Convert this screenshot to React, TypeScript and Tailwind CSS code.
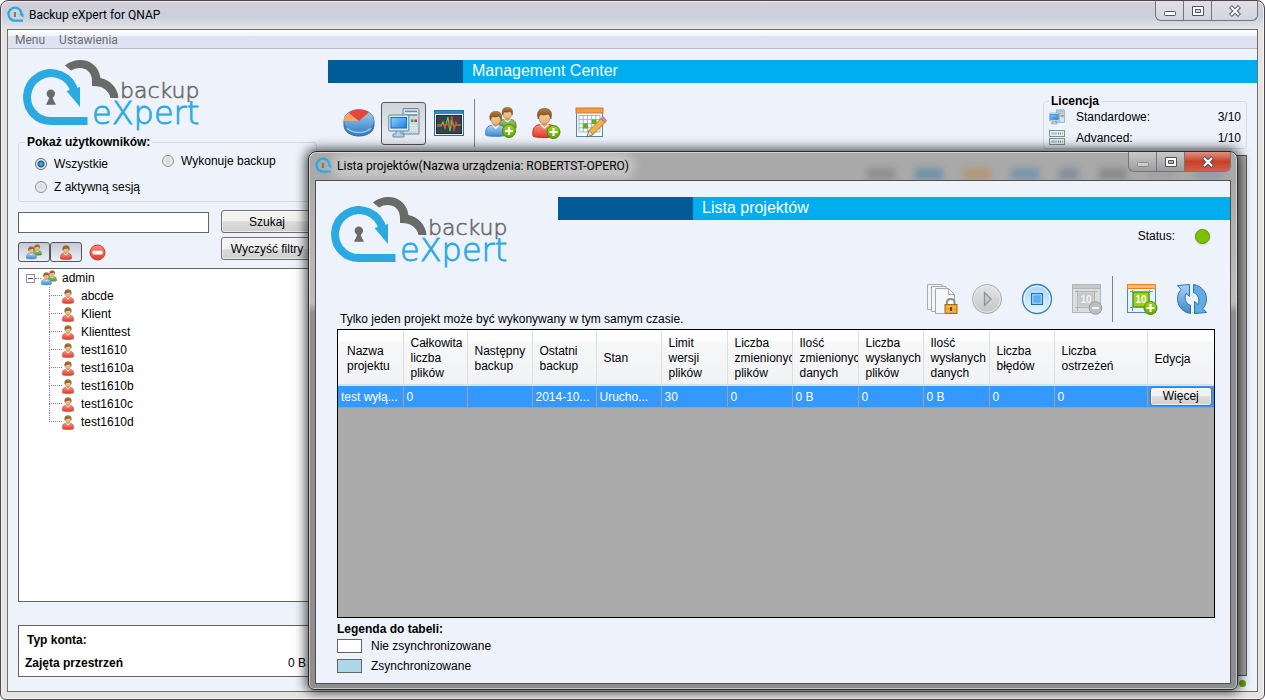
import type { ReactNode } from "react";

const USERS = ["abcde", "Klient", "Klienttest", "test1610", "test1610a", "test1610b", "test1610c", "test1610d"];

const COLUMNS = [
	{ lines: ["Nazwa", "projektu"], value: "test wyłą...", width: "w-[65px]" },
	{ lines: ["Całkowita", "liczba", "plików"], value: "0", width: "w-[64px]" },
	{ lines: ["Następny", "backup"], value: "", width: "w-[65px]" },
	{ lines: ["Ostatni", "backup"], value: "2014-10...", width: "w-[64px]" },
	{ lines: ["Stan"], value: "Urucho...", width: "w-[65px]" },
	{ lines: ["Limit", "wersji", "plików"], value: "30", width: "w-[66px]" },
	{ lines: ["Liczba", "zmienionych", "plików"], value: "0", width: "w-[65px]" },
	{ lines: ["Ilość", "zmienionych", "danych"], value: "0 B", width: "w-[66px]" },
	{ lines: ["Liczba", "wysłanych", "plików"], value: "0", width: "w-[65px]" },
	{ lines: ["Ilość", "wysłanych", "danych"], value: "0 B", width: "w-[66px]" },
	{ lines: ["Liczba", "błędów"], value: "0", width: "w-[65px]" },
	{ lines: ["Liczba", "ostrzeżeń"], value: "0", width: "" },
];

/* ---------- shared gradients ---------- */

function Gradients() {
	return (
		<svg width="0" height="0" className="absolute" aria-hidden="true">
			<defs>
				<linearGradient id="blue" x1="0" y1="0" x2="0" y2="1">
					<stop offset="0" stopColor="#a9d5f5" />
					<stop offset="1" stopColor="#3f87c9" />
				</linearGradient>
				<linearGradient id="red" x1="0" y1="0" x2="0" y2="1">
					<stop offset="0" stopColor="#f9907f" />
					<stop offset="1" stopColor="#e23a2c" />
				</linearGradient>
				<linearGradient id="green" x1="0" y1="0" x2="0" y2="1">
					<stop offset="0" stopColor="#9cc46c" />
					<stop offset="1" stopColor="#5f9132" />
				</linearGradient>
				<linearGradient id="badge" x1="0" y1="0" x2="0" y2="1">
					<stop offset="0" stopColor="#9bd81c" />
					<stop offset="1" stopColor="#5fa600" />
				</linearGradient>
				<linearGradient id="hair" x1="0" y1="0" x2="0" y2="1">
					<stop offset="0" stopColor="#b5803f" />
					<stop offset="1" stopColor="#6b3f12" />
				</linearGradient>
				<linearGradient id="skin" x1="0" y1="0" x2="0" y2="1">
					<stop offset="0" stopColor="#f5d3a6" />
					<stop offset="1" stopColor="#e5ae74" />
				</linearGradient>
				<linearGradient id="screen" x1="0" y1="0" x2="1" y2="1">
					<stop offset="0" stopColor="#8fd0ff" />
					<stop offset="1" stopColor="#1a7fe0" />
				</linearGradient>
				<linearGradient id="grey" x1="0" y1="0" x2="0" y2="1">
					<stop offset="0" stopColor="#e4e5e6" />
					<stop offset="1" stopColor="#c3c4c6" />
				</linearGradient>
				<linearGradient id="lightBlue" x1="0" y1="0" x2="0" y2="1">
					<stop offset="0" stopColor="#a6d4f8" />
					<stop offset="1" stopColor="#e6f6ff" />
				</linearGradient>
			</defs>
		</svg>
	);
}

/* ---------- icons ---------- */

function Logo() {
	return (
		<svg width="182" height="74" viewBox="0 0 182 74" role="img" aria-label="backup eXpert">
			<path d="M12 55 A24 24 0 1 1 51.5 32" fill="none" stroke="#2ba9e1" strokeWidth="8" />
			<path d="M10 53 C15 59 21 61 28 61 H64.5" fill="none" stroke="#2ba9e1" strokeWidth="8" />
			<path d="M43.5 31 L57 27 V47 Z" fill="#2ba9e1" />
			<path d="M42 5.5 C54 -4.5 75 -1 77.5 18 C87 20 95 28 95.5 38 H87.5 C86 30 79 25.5 69 26 V20 C68 8 57 5.5 48 10.5 Z" fill="#6a6a68" />
			<circle cx="27.8" cy="33.8" r="4.2" fill="#6a6a68" />
			<path d="M26 36 H29.6 L30 39 L33 44.8 H23 L25.8 39 Z" fill="#6a6a68" />
			<g fontFamily="'DejaVu Sans', sans-serif" fontWeight="200">
				<text x="97" y="38" fontSize="22" fill="#6a6a68" stroke="#6a6a68" strokeWidth="0.6">backup</text>
				<text x="69" y="64" fontSize="32" fill="#2ba9e1" stroke="#2ba9e1" strokeWidth="0.8">eXpert</text>
			</g>
		</svg>
	);
}

function AppIcon() {
	return (
		<svg width="17" height="17" viewBox="0 0 17 17" aria-hidden="true">
			<path d="M14.5 8 A6.5 6.5 0 1 0 8.5 14.6 H16" fill="none" stroke="#2ba9e1" strokeWidth="2.4" />
			<path d="M12 8 H16.5 V12 Z" fill="#2ba9e1" />
			<path d="M7 6 H9 V11 H6.8 Z" fill="#7c7c7c" />
		</svg>
	);
}

function PersonShape({ fill, stroke }: { fill: string; stroke: string }) {
	return (
		<g>
			<path d="M1 28 C0 20 3 17 8.5 16.5 H16.5 C22 17 25 20 24 28 C23 30 2 30 1 28 Z" fill={fill} stroke={stroke} />
			<path d="M8 16.5 L12.5 21 L17 16.5 Z" fill="#fff" stroke="#ddd" strokeWidth="0.5" />
			<path d="M10 13 H15 V17 L12.5 19 L10 17 Z" fill="#dca368" />
			<ellipse cx="12.5" cy="9.5" rx="5.6" ry="6.8" fill="url(#skin)" stroke="#a8723a" strokeWidth="0.6" />
			<path d="M6.2 11 C4 3 8 0.5 12.5 0.5 C17.5 0.5 21 3 18.8 11 C18.5 8 17.5 7 16 6 C13 7.5 9.5 7 8.5 6.5 C7 8 6.6 9 6.2 11 Z" fill="url(#hair)" stroke="#70451a" strokeWidth="0.6" />
		</g>
	);
}

function Plus({ x, y }: { x: number; y: number }) {
	return (
		<g transform={`translate(${x} ${y})`}>
			<circle r="6.5" fill="url(#badge)" stroke="#4b8a00" />
			<path d="M-4 0 H4 M0 -4 V4" stroke="#fff" strokeWidth="2.2" />
		</g>
	);
}

function UserIcon({ className }: { className: string }) {
	return (
		<svg className={className} viewBox="0 0 25 30" aria-hidden="true">
			<PersonShape fill="url(#red)" stroke="#c32b1f" />
		</svg>
	);
}

function GroupShape() {
	return (
		<>
			<g transform="translate(13 0) scale(0.75)">
				<PersonShape fill="url(#green)" stroke="#4d7c28" />
			</g>
			<g transform="translate(0 4) scale(0.86)">
				<PersonShape fill="url(#blue)" stroke="#2f76bd" />
			</g>
		</>
	);
}

function GroupIcon({ className }: { className: string }) {
	return (
		<svg className={className} viewBox="0 0 32 31" aria-hidden="true">
			<GroupShape />
		</svg>
	);
}

function PieIcon() {
	return (
		<svg width="32" height="32" viewBox="0 0 32 32" aria-hidden="true">
			<path d="M1 14 V18 C1 25 8 29 16 29 C24 29 31 25 31 18 V14 Z" fill="#3c7fbb" stroke="#2e6ca6" />
			<ellipse cx="16" cy="13.5" rx="15" ry="11" fill="url(#blue)" stroke="#4c93cf" />
			<path d="M16 14 L5.5 6 C2 8.5 0.8 11 1.2 14 Z" fill="#f3a763" />
			<path d="M16 14 L5.5 5.8 C11 1.5 20 1.5 26 5.3 Z" fill="#e8463a" />
			<path d="M4 21 C9 27 23 27 28 21" fill="none" stroke="#8fc6ef" strokeWidth="1.5" />
		</svg>
	);
}

function ComputerIcon({ className }: { className: string }) {
	return (
		<svg className={className} viewBox="0 0 32 32" aria-hidden="true">
			<path d="M15 1.5 H30 L31 3 V27 H15 Z" fill="#ccdae4" stroke="#6d8ba1" />
			<path d="M17 4.5 H29 M17 8 H29" stroke="#6d8ba1" strokeWidth="1.5" />
			<path d="M17 6.2 H29" stroke="#fff" />
			<rect x="23" y="12.5" width="2.5" height="2.5" fill="#2dab2d" />
			<rect x="26.5" y="12.5" width="2.5" height="2.5" fill="#e02828" />
			<path d="M22 18.5 H29 M22 21 H29 M22 23.5 H29" stroke="#fff" strokeDasharray="1 1" />
			<path d="M8 23 H13 V27 H16 V30 H5 V27 H8 Z" fill="#b9d3e3" stroke="#6793ae" />
			<rect x="0.8" y="8" width="20" height="16" rx="1" fill="#d7e9f4" stroke="#5d8cab" />
			<rect x="3" y="10.5" width="15.5" height="10.5" fill="url(#screen)" stroke="#1b6fbd" />
		</svg>
	);
}

function MonitorIcon() {
	return (
		<svg width="32" height="32" viewBox="0 0 32 32" aria-hidden="true">
			<rect x="1.5" y="3.5" width="29" height="25" fill="#e2f1fa" stroke="#1d74a8" />
			<rect x="2" y="4" width="28" height="3" fill="#2b8cc4" />
			<rect x="3.5" y="8.5" width="25" height="18" fill="#3b4146" stroke="#262b2f" />
			<path d="M4 19 H8 L10 15 L12 21 L15 10 L17 24 L19 13 L21 21 L22 18 H28" fill="none" stroke="#3fe05a" strokeWidth="1.2" />
			<path d="M4 17.5 H10 L12 20 L14 16 L16 20 L19 9 L21 24 L23 15 L24 18 H28" fill="none" stroke="#f2413a" strokeWidth="1.1" />
		</svg>
	);
}

function AddGroupIcon() {
	return (
		<svg width="32" height="32" viewBox="0 0 32 32" aria-hidden="true">
			<GroupShape />
			<Plus x={24} y={24} />
		</svg>
	);
}

function AddUserIcon() {
	return (
		<svg width="32" height="32" viewBox="0 0 32 32" aria-hidden="true">
			<g transform="translate(2 1)">
				<PersonShape fill="url(#red)" stroke="#c32b1f" />
			</g>
			<Plus x={23.5} y={25} />
		</svg>
	);
}

function CalendarEditIcon() {
	return (
		<svg width="32" height="32" viewBox="0 0 32 32" aria-hidden="true">
			<rect x="1.5" y="1.5" width="26" height="28" fill="#fbfdff" stroke="#4a8ab5" />
			<rect x="1" y="1" width="27" height="5" fill="#f39a4a" stroke="#d47924" />
			<path d="M4 8.5 H25 V25 H4 Z M8.2 8.5 V25 M12.4 8.5 V25 M16.6 8.5 V25 M20.8 8.5 V25 M4 12.6 H25 M4 16.7 H25 M4 20.8 H25" fill="none" stroke="#a2b6c2" />
			<rect x="8" y="16.5" width="5" height="5" fill="#5fae1f" />
			<rect x="17" y="12.5" width="4.5" height="4.5" fill="#5fae1f" />
			<path d="M12 30 L14 23.5 L26 11.5 L30 15.5 L18 27.5 Z" fill="#f5b04a" stroke="#9b671d" strokeWidth="0.8" />
			<path d="M12 30 L14 23.5 L18 27.5 Z" fill="#f4dfc0" stroke="#555" strokeWidth="0.6" />
			<path d="M26 11.5 L28 9.5 L31.5 13.5 L30 15.5 Z" fill="#d88cb4" stroke="#8d5a78" strokeWidth="0.7" />
		</svg>
	);
}

function ServerIcon() {
	return (
		<svg className="h-4 w-4" viewBox="0 0 16 16" aria-hidden="true">
			{[0.5, 8.5].map((y) => (
				<g key={y} transform={`translate(0 ${y})`}>
					<rect x="0.5" y="0" width="15" height="6" fill="#e9eef2" stroke="#7b91a1" />
					<path d="M2.5 3 H8" stroke="#7c8994" strokeWidth="2" strokeDasharray="1 1" />
					<path d="M9 3 H10 M11 3 H12" stroke="#49a34a" strokeWidth="2" />
					<path d="M13 3 H14" stroke="#e89a2a" strokeWidth="2" />
				</g>
			))}
		</svg>
	);
}

function RemoveIcon() {
	return (
		<svg width="17" height="17" viewBox="0 0 17 17" aria-hidden="true">
			<circle cx="8.5" cy="8.5" r="7.5" fill="url(#red)" stroke="#c93a2d" />
			<rect x="3.5" y="6.8" width="10" height="3.6" rx="1" fill="#fff" />
		</svg>
	);
}

function LockedFilesIcon() {
	return (
		<svg width="32" height="32" viewBox="0 0 32 32" aria-hidden="true">
			<path d="M1.5 1.5 H16 V26.5 H1.5 Z" fill="#f3f4f5" stroke="#aaadb0" />
			<path d="M5.5 3.5 H20 V28.5 H5.5 Z" fill="#f3f4f5" stroke="#aaadb0" />
			<path d="M9.5 5.5 H22.5 L28.5 11.5 V30.5 H9.5 Z" fill="#f6f7f8" stroke="#a3a6aa" />
			<path d="M22.5 5.5 V11.5 H28.5 Z" fill="#fff" stroke="#a3a6aa" />
			<path d="M21 22 V19 C21 15 28.5 15 28.5 19 V22" fill="none" stroke="#8c9095" strokeWidth="2" />
			<rect x="19" y="21.5" width="12" height="9" fill="#e9a12c" stroke="#a96c0d" />
			<path d="M20 24 H30 M20 28 H30" stroke="#f7c872" />
			<rect x="24" y="24" width="2" height="4" fill="#6b4204" />
		</svg>
	);
}

function PlayIcon() {
	return (
		<svg width="32" height="32" viewBox="0 0 32 32" aria-hidden="true">
			<circle cx="16" cy="16" r="14.5" fill="url(#grey)" stroke="#abadb0" />
			<circle cx="16" cy="16" r="13.2" fill="none" stroke="#e6e7e8" />
			<path d="M13.5 9.5 L20 16 L13.5 22.5 Z" fill="#c9cacc" stroke="#8f9194" strokeWidth="1.3" />
		</svg>
	);
}

function StopIcon() {
	return (
		<svg width="32" height="32" viewBox="0 0 32 32" aria-hidden="true">
			<circle cx="16" cy="16" r="14.5" fill="url(#lightBlue)" stroke="#3a80b8" strokeWidth="1.3" />
			<circle cx="16" cy="16" r="13" fill="none" stroke="#e9f6ff" />
			<rect x="10.5" y="10.5" width="11" height="11" fill="#5fadea" stroke="#2b6da6" />
			<rect x="11.8" y="11.8" width="8.4" height="8.4" fill="none" stroke="#a5d6fa" />
		</svg>
	);
}

function RemoveTaskIcon() {
	return (
		<svg width="32" height="32" viewBox="0 0 32 32" aria-hidden="true">
			<rect x="1.5" y="1.5" width="28" height="28" fill="#dcddde" stroke="#b3b5b7" />
			<rect x="1.5" y="1.5" width="28" height="4" fill="#c6c8ca" stroke="#b3b5b7" />
			<path d="M4 8.5 H27 M4 24.5 H27 M6.5 7 V28 M23.5 7 V28" stroke="#b0b2b4" />
			<rect x="7.5" y="9.5" width="15" height="14" fill="#c6c8ca" />
			<text x="15" y="20" fontSize="10" fontWeight="700" textAnchor="middle" fill="#f3f3f3">10</text>
			<circle cx="24.5" cy="25" r="6.3" fill="#bcbec0" stroke="#999b9d" />
			<path d="M21 25 H28" stroke="#f1f1f1" strokeWidth="2.2" />
		</svg>
	);
}

function AddTaskIcon() {
	return (
		<svg width="32" height="32" viewBox="0 0 32 32" aria-hidden="true">
			<rect x="1.5" y="1.5" width="28" height="28" fill="#e6f3fb" stroke="#4a8ab5" />
			<rect x="1.5" y="1.5" width="28" height="4" fill="#f9bb80" stroke="#f07f1c" />
			<path d="M4 8.5 H27 M4 24.5 H27 M6.5 7 V28 M23.5 7 V28" stroke="#7d98a8" />
			<rect x="7.5" y="9.5" width="15" height="14" fill="#9ccf1e" stroke="#6aa612" />
			<text x="15" y="20" fontSize="10" fontWeight="700" textAnchor="middle" fill="#fff">10</text>
			<Plus x={24.5} y={25} />
		</svg>
	);
}

function RefreshIcon() {
	const arrow = "M1.5 2.5 L13.5 1.5 V13.5 L10 10.5 C8 15 9.5 20.5 14.5 22.5 V30.5 C2.5 28.5 -2.5 15.5 5 6.5 Z";
	return (
		<svg width="32" height="32" viewBox="0 0 32 32" aria-hidden="true">
			<path d={arrow} fill="url(#blue)" stroke="#2d74b0" />
			<path d={arrow} transform="rotate(180 16 16)" fill="#62aae2" stroke="#2d74b0" />
		</svg>
	);
}

/* ---------- window parts ---------- */

function MinimizeGlyph() {
	return (
		<svg width="14" height="12" viewBox="0 0 14 12" aria-hidden="true">
			<rect x="1.5" y="6.5" width="11" height="4" rx="1" fill="#fff" stroke="#50545e" />
		</svg>
	);
}

function MaximizeGlyph() {
	return (
		<svg width="14" height="12" viewBox="0 0 14 12" aria-hidden="true">
			<path d="M1.5 1.5 H12.5 V10.5 H1.5 Z M4.5 4.5 H9.5 V7.5 H4.5 Z" fill="#fff" fillRule="evenodd" stroke="#50545e" />
		</svg>
	);
}

function CloseGlyph() {
	return (
		<svg width="14" height="12" viewBox="0 0 14 12" aria-hidden="true">
			<path d="M2.5 1.5 L11.5 10.5 M11.5 1.5 L2.5 10.5" stroke="#50545e" strokeWidth="4.2" />
			<path d="M3 2 L11 10 M11 2 L3 10" stroke="#fff" strokeWidth="2.2" />
		</svg>
	);
}

function Caption({ active }: { active?: boolean }) {
	const cell = "flex items-center justify-center border-r border-[#72757d]";
	return (
		<div className={`flex h-5 overflow-hidden rounded-b-md border border-t-0 border-[#72757d] bg-linear-to-b ${active ? "from-[#c9c9c9] to-[#9d9d9d]" : "from-[#e0dfe4] to-[#d2d6e2]"}`}>
			<button type="button" aria-label="Minimalizuj" disabled={active} className={`${cell} w-7 ${active ? "*:opacity-40" : ""}`}>
				<MinimizeGlyph />
			</button>
			<button type="button" aria-label="Maksymalizuj" className={`${cell} w-7`}>
				<MaximizeGlyph />
			</button>
			<button type="button" aria-label="Zamknij" className={`flex w-[45px] items-center justify-center ${active ? "bg-linear-to-b from-[#dd9184] via-[#c83f26] to-[#d0604a]" : ""}`}>
				<CloseGlyph />
			</button>
		</div>
	);
}

function Banner({ title }: { title: string }) {
	return (
		<div className="flex h-[23px] bg-[#00adef]">
			<div className="w-[135px] bg-[#005b97]" />
			<h1 className="pl-[9px] text-base leading-[22px] text-white">{title}</h1>
		</div>
	);
}

function GroupBox({ title, className, children }: { title: string; className: string; children: ReactNode }) {
	return (
		<fieldset className={`rounded-[3px] border border-[#d5dbe3] ${className}`}>
			<legend className="px-[2px] leading-[14px] font-bold">{title}</legend>
			{children}
		</fieldset>
	);
}

function Radio({ label, checked }: { label: string; checked?: boolean }) {
	return (
		<label className="flex items-center gap-[7px]">
			<input
				type="radio"
				name="filter"
				defaultChecked={checked}
				className="h-3 w-3 appearance-none rounded-full border border-[#8e8f8f] bg-[radial-gradient(#d5d8db,#f4f4f4)] checked:border-[#5e6a75] checked:bg-[radial-gradient(#5fc6f5_0,#14598c_3px,#e8eaec_4px)]"
			/>
			{label}
		</label>
	);
}

function PushButton({ children, className }: { children: ReactNode; className: string }) {
	return (
		<button type="button" className={`rounded-[3px] border border-[#707070] bg-linear-to-b from-[#f2f2f2] from-50% via-[#dddddd] via-50% to-[#cfcfcf] text-center ring-1 ring-white/60 ring-inset ${className}`}>
			{children}
		</button>
	);
}

function ToolButton({ label, className, disabled, children }: { label: string; className: string; disabled?: boolean; children: ReactNode }) {
	return (
		<button type="button" aria-label={label} disabled={disabled} className={`flex items-center justify-center ${className}`}>
			{children}
		</button>
	);
}

function Sidebar() {
	return (
		<aside className="flex w-[320px] shrink-0 flex-col pr-[11px] pb-[14px] pl-[10px]">
			<div className="mt-[11px] ml-[5px]">
				<Logo />
			</div>
			<GroupBox title="Pokaż użytkowników:" className="mt-px h-[67px] pl-[6px]">
				<div className="flex pl-[10px]">
					<div className="flex flex-col gap-[7px] pt-[7px]">
						<Radio label="Wszystkie" checked />
						<Radio label="Z aktywną sesją" />
					</div>
					<div className="ml-[22px] pt-1">
						<Radio label="Wykonuje backup" />
					</div>
				</div>
			</GroupBox>
			<div className="mt-2 flex gap-3">
				<div className="pt-[2px]">
					<input type="text" aria-label="Szukaj użytkownika" className="block h-[21px] w-[191px] border border-[#646464] bg-white px-1" />
					<div className="mt-[9px] flex items-center">
						<ToolButton label="Grupy" className="h-5 w-8 rounded-[3px] border border-[#55565a] bg-linear-to-b from-[#c5c9d2] to-[#eceff5]">
							<GroupIcon className="h-4 w-4" />
						</ToolButton>
						<ToolButton label="Użytkownicy" className="h-5 w-8 rounded-[3px] border border-[#55565a] bg-linear-to-b from-[#c5c9d2] to-[#eceff5]">
							<UserIcon className="h-[15px] w-3" />
						</ToolButton>
						<ToolButton label="Usuń" className="ml-[7px]">
							<RemoveIcon />
						</ToolButton>
					</div>
				</div>
				<div className="flex w-[92px] flex-col gap-1">
					<PushButton className="h-[23px]">Szukaj</PushButton>
					<PushButton className="h-[23px]">Wyczyść filtry</PushButton>
				</div>
			</div>
			<div className="mt-[6px] flex-1 border border-[#646464] bg-white pl-[7px]">
				<div className="flex h-[18px] items-center">
					<button type="button" aria-label="Zwiń" className="flex h-[9px] w-[9px] items-center justify-center border border-[#919191] bg-white">
						<span className="h-px w-[5px] bg-[#2b4f9e]" />
					</button>
					<span className="w-[6px] border-t border-dotted border-[#808080]" />
					<GroupIcon className="h-4 w-4" />
					<span className="pl-[5px]">admin</span>
				</div>
				<ul className="ml-[23px]">
					{USERS.map((user) => (
						<li key={user} className="group flex h-[18px] items-center">
							<span className="flex h-full w-[13px] flex-col">
								<span className="h-[9px] border-b border-l border-dotted border-[#808080]" />
								<span className="flex-1 border-l border-dotted border-[#808080] group-last:border-transparent" />
							</span>
							<UserIcon className="h-[15px] w-3" />
							<span className="pl-[7px]">{user}</span>
						</li>
					))}
				</ul>
			</div>
			<dl className="mt-[23px] grid h-[52px] grid-cols-2 content-center gap-y-2 border border-[#646464] bg-white px-[6px] pt-[2px] leading-[15px]">
				<dt className="pl-[2px] font-bold">Typ konta:</dt>
				<dd />
				<dt className="font-bold">Zajęta przestrzeń</dt>
				<dd className="pr-1 text-right">0 B</dd>
			</dl>
		</aside>
	);
}

function License() {
	return (
		<GroupBox title="Licencja" className="mr-[10px] h-[55px] w-[204px] px-[5px]">
			<dl className="flex flex-col gap-[5px] pt-px">
				<div className="flex h-4 items-center">
					<ComputerIcon className="h-4 w-4" />
					<dt className="flex-1 pl-[11px]">Standardowe:</dt>
					<dd>3/10</dd>
				</div>
				<div className="flex h-4 items-center">
					<ServerIcon />
					<dt className="flex-1 pl-[11px]">Advanced:</dt>
					<dd>1/10</dd>
				</div>
			</dl>
		</GroupBox>
	);
}

function ProjectTable() {
	return (
		<div className="flex-1 border border-black bg-[#ababab]">
			<table className="w-full table-fixed border-collapse text-left">
				<thead>
					<tr className="h-[55px] bg-linear-to-b from-white from-20% via-[#f7f8fa] via-20% to-[#f1f2f4]">
						{COLUMNS.map((column, i) => (
							<th key={i} className={`overflow-hidden border-r border-b-2 border-[#dcdee1] pt-[3px] pl-[7px] leading-[15px] font-normal whitespace-nowrap first:pl-[9px] ${column.width}`}>
								{column.lines.map((line) => (
									<span key={line} className="block">{line}</span>
								))}
							</th>
						))}
						<th className="w-[67px] border-b-2 border-[#dcdee1] pt-[3px] pl-[7px] font-normal">Edycja</th>
					</tr>
				</thead>
				<tbody>
					<tr className="h-[22px] bg-[#3399ff] text-white">
						{COLUMNS.map((column, i) => (
							<td key={i} className="overflow-hidden border-r border-b border-[#a0a0a0] pt-px pl-[3px] whitespace-nowrap">{column.value}</td>
						))}
						<td className="border-b border-[#a0a0a0] px-[2px]">
							<PushButton className="block h-[19px] w-full leading-[17px] text-black">Więcej</PushButton>
						</td>
					</tr>
				</tbody>
			</table>
		</div>
	);
}

function ProjectWindow() {
	return (
		<section className="absolute top-[150px] right-[26px] bottom-[9px] left-[307px] flex flex-col rounded-t-lg rounded-b-md border border-[#2c2c2c] bg-linear-to-b from-[#a9a9a9] from-5% via-[#bdbdbd] via-28% to-[#8e8e90] to-30% px-[6px] pb-[5px] shadow-[0_0_12px_2px_rgba(0,0,0,0.75)] ring-1 ring-white/50 ring-inset">
			<header className="relative flex h-7 items-start justify-between overflow-hidden">
				{/* things behind the glass */}
				<div className="absolute top-4 right-2 flex gap-5 opacity-50 blur-[3px]" aria-hidden="true">
					<span className="h-3 w-7 bg-[#777]" />
					<span className="h-3 w-7 bg-[#3f7ca2]" />
					<span className="h-3 w-7 bg-[#b98a4a]" />
					<span className="h-3 w-7 bg-[#4a86a8]" />
					<span className="h-3 w-5 bg-[#5f7894]" />
					<span className="h-3 w-7 bg-[#6b6f74]" />
					<span className="h-3 w-7 bg-[#9a9a9a]" />
					<span className="h-3 w-7 bg-[#7d93ad]" />
				</div>
				<div className="relative flex items-center gap-[5px] pt-[5px]">
					<AppIcon />
					<h2 className="rounded-full bg-white/30 font-[Roboto,sans-serif] text-xs leading-4 shadow-[0_0_8px_6px_rgba(255,255,255,0.3)]">Lista projektów(Nazwa urządzenia: ROBERTST-OPERO)</h2>
				</div>
				<div className="relative">
					<Caption active />
				</div>
			</header>
			<div className="flex flex-1 flex-col border border-[#4f4f4f] bg-[#eef3fb]">
				<div className="flex h-[148px] pt-4">
					<div className="flex w-[242px] shrink-0 flex-col justify-between pl-[15px]">
						<Logo />
						<p className="pb-[2px] pl-[9px] leading-4 whitespace-nowrap">Tylko jeden projekt może być wykonywany w tym samym czasie.</p>
					</div>
					<div className="flex-1">
						<Banner title="Lista projektów" />
						<div className="flex h-8 items-center justify-end gap-[20px] pr-5">
							<span>Status:</span>
							<span className="h-[15px] w-[15px] rounded-full border border-[#5b9408] bg-[#7fc203] shadow-sm" />
						</div>
						<div className="mt-6 flex h-[46px] items-center justify-end pr-[13px]">
							<ToolButton label="Blokada plików" className="w-10">
								<LockedFilesIcon />
							</ToolButton>
							<ToolButton label="Uruchom" disabled className="w-[50px]">
								<PlayIcon />
							</ToolButton>
							<ToolButton label="Zatrzymaj" className="w-[50px]">
								<StopIcon />
							</ToolButton>
							<ToolButton label="Usuń projekt" disabled className="w-[50px]">
								<RemoveTaskIcon />
							</ToolButton>
							<span className="mr-1 h-full w-px bg-[#808080]" />
							<ToolButton label="Dodaj projekt" className="w-[50px]">
								<AddTaskIcon />
							</ToolButton>
							<ToolButton label="Odśwież" className="w-[50px]">
								<RefreshIcon />
							</ToolButton>
						</div>
					</div>
				</div>
				<div className="flex flex-1 flex-col pr-[15px] pl-[21px]">
					<ProjectTable />
				</div>
				<div className="h-[65px] pt-1 pl-[21px]">
					<p className="leading-[15px] font-bold">Legenda do tabeli:</p>
					<ul className="mt-[2px] flex flex-col gap-[6px]">
						<li className="flex h-[14px] items-center gap-[9px]">
							<span className="h-[14px] w-[25px] border border-[#646464] bg-white" />
							Nie zsynchronizowane
						</li>
						<li className="flex h-[14px] items-center gap-[9px]">
							<span className="h-[14px] w-[25px] border border-[#646464] bg-[#add8e6]" />
							Zsynchronizowane
						</li>
					</ul>
				</div>
			</div>
		</section>
	);
}

export default function App() {
	return (
		<div className="relative flex h-screen flex-col overflow-hidden rounded-t-lg rounded-b-md border border-[#4b4650] bg-linear-to-b from-[#d3cfd6] via-[#cbd0dd] via-[16px] to-[#e6e4e2] to-[28px] px-[6px] pb-[7px] font-['Liberation_Sans',Arial,sans-serif] text-xs text-black ring-1 ring-white/60 ring-inset">
			<Gradients />
			<header className="flex h-7 items-start justify-between">
				<div className="flex items-center gap-[5px] pt-[5px]">
					<AppIcon />
					<span className="font-[Roboto,sans-serif] leading-4">Backup eXpert for QNAP</span>
				</div>
				<Caption />
			</header>
			<div className="flex flex-1 flex-col border border-[#6e6e6e] bg-[#eef3fb]">
				<nav className="flex h-[19px] items-center gap-[14px] border-b border-[#b6bccc] bg-linear-to-b from-white via-[#f0f3fa] via-35% to-[#dde3f3] to-36% pt-[2px] pl-[7px] font-[Roboto,sans-serif] text-[#6d6d6d]">
					<button type="button">Menu</button>
					<button type="button">Ustawienia</button>
				</nav>
				<div className="flex flex-1">
					<Sidebar />
					<main className="flex flex-1 flex-col pt-[11px]">
						<Banner title="Management Center" />
						<div className="flex h-[72px] items-start justify-between pt-[11px]">
							<div className="mt-[3px] flex h-12 items-center pt-1 pl-2">
								<ToolButton label="Statystyki" className="h-[43px] w-[45px]">
									<PieIcon />
								</ToolButton>
								<ToolButton label="Urządzenia" className="h-[43px] w-[45px] rounded-[3px] border border-[#55565a] bg-linear-to-b from-[#cfd3db] to-[#eceff5]">
									<ComputerIcon className="h-8 w-8" />
								</ToolButton>
								<ToolButton label="Monitor" className="h-[43px] w-[45px]">
									<MonitorIcon />
								</ToolButton>
								<span className="mx-[3px] h-12 w-px bg-[#808080]" />
								<ToolButton label="Dodaj grupę" className="h-[43px] w-[45px]">
									<AddGroupIcon />
								</ToolButton>
								<ToolButton label="Dodaj użytkownika" className="h-[43px] w-[45px]">
									<AddUserIcon />
								</ToolButton>
								<ToolButton label="Harmonogram" className="h-[43px] w-[45px]">
									<CalendarEditIcon />
								</ToolButton>
							</div>
							<License />
						</div>
						<div className="mr-[10px] flex-1 border border-[#555] bg-[#ababab]" />
						<div className="flex h-[15px] items-center justify-end pr-[11px]">
							<span className="h-[7px] w-[7px] rounded-full bg-[#6aa507]" />
						</div>
					</main>
				</div>
			</div>
			<ProjectWindow />
		</div>
	);
}
